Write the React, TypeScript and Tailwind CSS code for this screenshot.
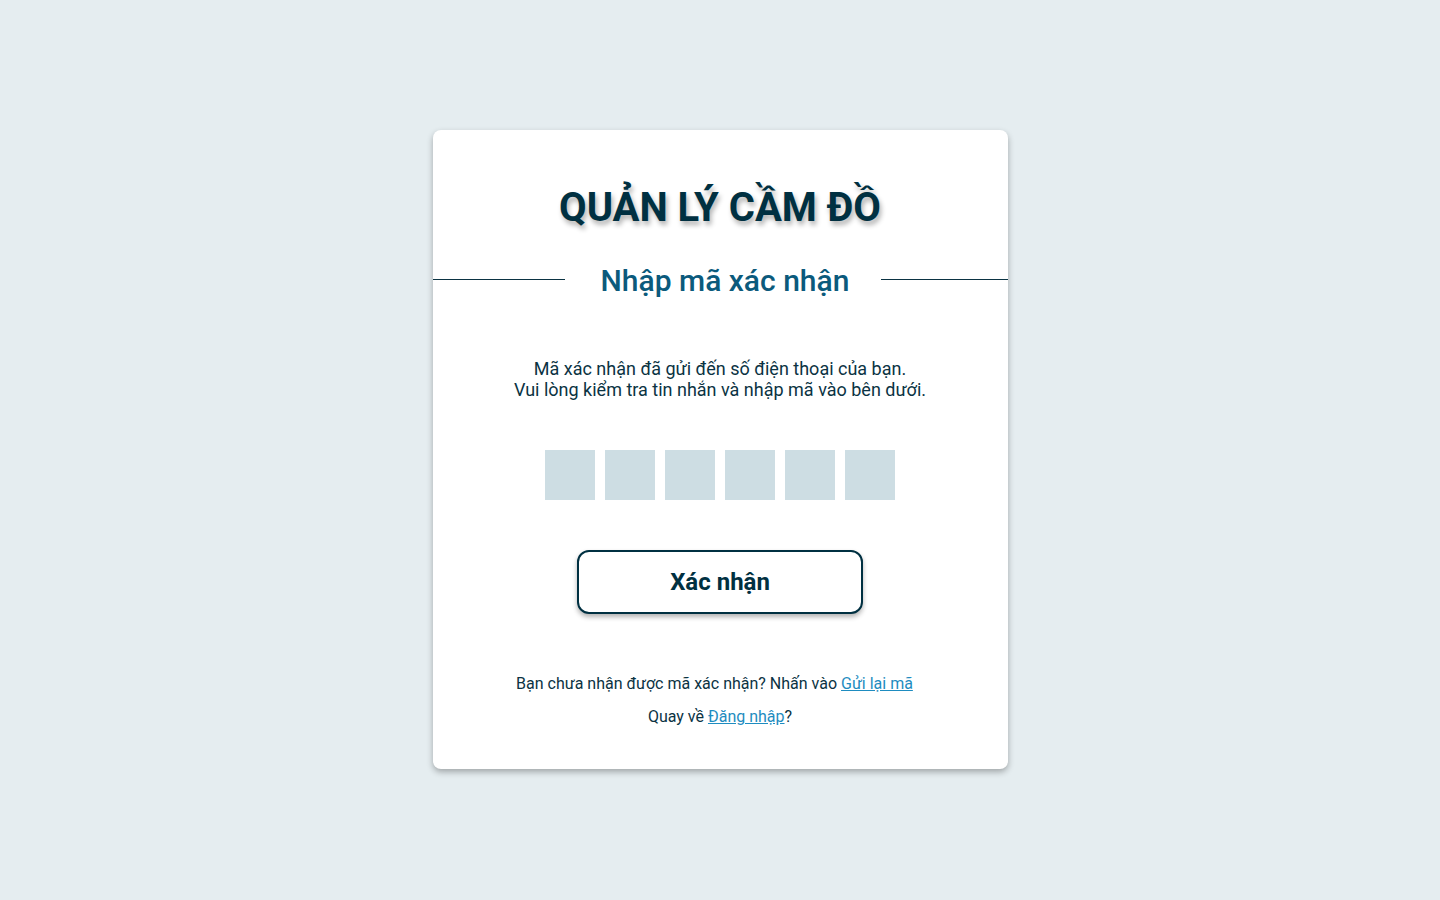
export default function App() {
  return (
    <div className="min-h-screen w-full bg-[#e5edf0] flex justify-center pt-[130px] font-['Roboto',sans-serif] text-[#0b3343]">
      <div className="w-[575px] h-[639px] bg-white rounded-[8px] shadow-[0_3px_6px_rgba(0,0,0,0.3)] flex flex-col items-center">
        <h1 className="mt-[54px] text-[40px] leading-[48px] font-bold text-[#003041] [text-shadow:2px_4px_5px_rgba(0,0,0,0.3)]">
          QUẢN LÝ CẦM ĐỒ
        </h1>
        <div className="mt-[28px] w-full flex items-center">
          <div className="w-[132px] h-px bg-[#0b3343]" />
          <h2 className="flex-1 text-center pl-[5px] pt-[3px] text-[30px] leading-[36px] font-medium text-[#0b5a7c]">
            Nhập mã xác nhận
          </h2>
          <div className="w-[127px] h-px bg-[#0b3343]" />
        </div>
        <p className="mt-[59px] text-center text-[18px] leading-[21px] text-[#0b3343]">
          Mã xác nhận đã gửi đến số điện thoại của bạn.
          <br />
          Vui lòng kiểm tra tin nhắn và nhập mã vào bên dưới.
        </p>
        <div className="mt-[50px] flex gap-[10px]">
          {[0, 1, 2, 3, 4, 5].map((i) => (
            <input
              key={i}
              maxLength={1}
              className="w-[50px] h-[50px] bg-[#cddde3] outline-none text-center text-2xl"
            />
          ))}
        </div>
        <button className="mt-[50px] w-[286px] h-[64px] border-2 border-[#003041] rounded-[12px] bg-white shadow-[0_3px_5px_rgba(0,0,0,0.3)] text-[24px] font-bold text-[#003041]">
          Xác nhận
        </button>
        <p className="mt-[59px] pr-[11px] text-[16px] leading-[22px]">
          Bạn chưa nhận được mã xác nhận? Nhấn vào{" "}
          <a href="#" className="text-[#1e8cc0] underline">
            Gửi lại mã
          </a>
        </p>
        <p className="mt-[11px] text-[16px] leading-[22px]">
          Quay về{" "}
          <a href="#" className="text-[#1e8cc0] underline">
            Đăng nhập
          </a>
          ?
        </p>
      </div>
    </div>
  );
}
